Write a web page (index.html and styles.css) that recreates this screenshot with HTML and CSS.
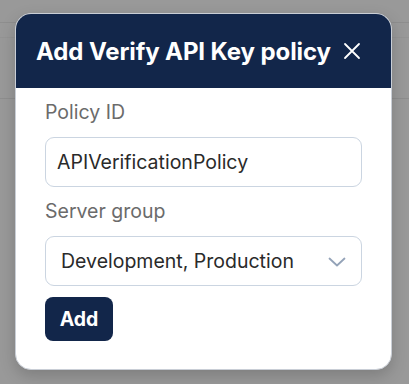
FILE: index.html
```html
<!DOCTYPE html>
<html>
<head>
<meta charset="utf-8">
<link rel="stylesheet" href="styles.css">
</head>
<body>
<div class="backdrop">
  <div class="bg-line l1"></div>
  <div class="bg-line l2"></div>
  <div class="bg-line l3"></div>
  <div class="modal">
    <div class="header">
      <h1 class="title">Add Verify API Key policy</h1>
      <button class="close" aria-label="Close">
        <svg width="18" height="18" viewBox="0 0 18 18"><path d="M2 2 L16 16 M16 2 L2 16" stroke="#fff" stroke-width="1.8" stroke-linecap="round" fill="none"/></svg>
      </button>
    </div>
    <div class="body">
      <div class="field">
        <label class="label">Policy ID</label>
        <div class="input">APIVerificationPolicy</div>
      </div>
      <div class="field">
        <label class="label">Server group</label>
        <div class="input select">
          <span class="select-text">Development, Production</span>
          <svg class="chev" width="18" height="10" viewBox="0 0 18 10"><path d="M1.5 1.5 L9 8.5 L16.5 1.5" stroke="#94a3b8" stroke-width="1.8" stroke-linecap="round" stroke-linejoin="round" fill="none"/></svg>
        </div>
      </div>
      <button class="add">Add</button>
    </div>
  </div>
</div>
</body>
</html>
```
FILE: styles.css
```css
* { box-sizing: border-box; }
html, body { margin: 0; padding: 0; }
body {
  width: 409px;
  height: 384px;
  overflow: hidden;
  background: #999999;
  font-family: Inter, "Noto Sans", sans-serif;
}
.backdrop {
  position: relative;
  width: 409px;
  height: 384px;
  padding: 13px 17px 0 15px;
}
.bg-line {
  position: absolute;
  left: 0;
  right: 0;
  height: 1px;
  background: #8e8e8e;
}
.l1 { top: 22px; }
.l2 { top: 37px; background: #949494; }
.l3 { top: 98px; }
.modal {
  position: relative;
  width: 377px;
  height: 357px;
  background: #fff;
  border-radius: 16px;
  overflow: hidden;
  box-shadow: 0 6px 16px rgba(0,0,0,0.18);
  border: 1px solid #c9ced6;
}
.header {
  background: #12264a;
  height: 74px;
  display: flex;
  align-items: center;
  padding: 0 20px 0 20px;
  gap: 12px;
}
.title {
  margin: 0;
  color: #fff;
  font-size: 24px;
  font-weight: 700;
  letter-spacing: -0.1px;
  white-space: nowrap;
}
.close {
  background: none;
  border: 0;
  padding: 0;
  width: 18px;
  height: 18px;
  display: flex;
}
.body {
  padding: 11px 29px 0 29px;
  display: flex;
  flex-direction: column;
}
.field {
  display: flex;
  flex-direction: column;
}
.label {
  font-size: 19.5px;
  color: #6b6b6b;
  line-height: 26px;
  margin-bottom: 12px;
}
.field + .field .label { margin-top: 11px; }
.input {
  height: 50px;
  border: 1px solid #cbd5e1;
  border-radius: 9px;
  display: flex;
  align-items: center;
  padding: 0 11px;
  font-size: 19.5px;
  color: #2a2a2a;
}
.select {
  padding: 0 15px 0 15px;
  justify-content: space-between;
}
.chev { margin-top: 2px; }
.add {
  margin-top: 11px;
  align-self: flex-start;
  width: 68px;
  height: 44px;
  border: 0;
  border-radius: 8px;
  background: #12264a;
  color: #fff;
  font-family: Inter, "Noto Sans", sans-serif;
  font-size: 19.5px;
  font-weight: 700;
}
```
